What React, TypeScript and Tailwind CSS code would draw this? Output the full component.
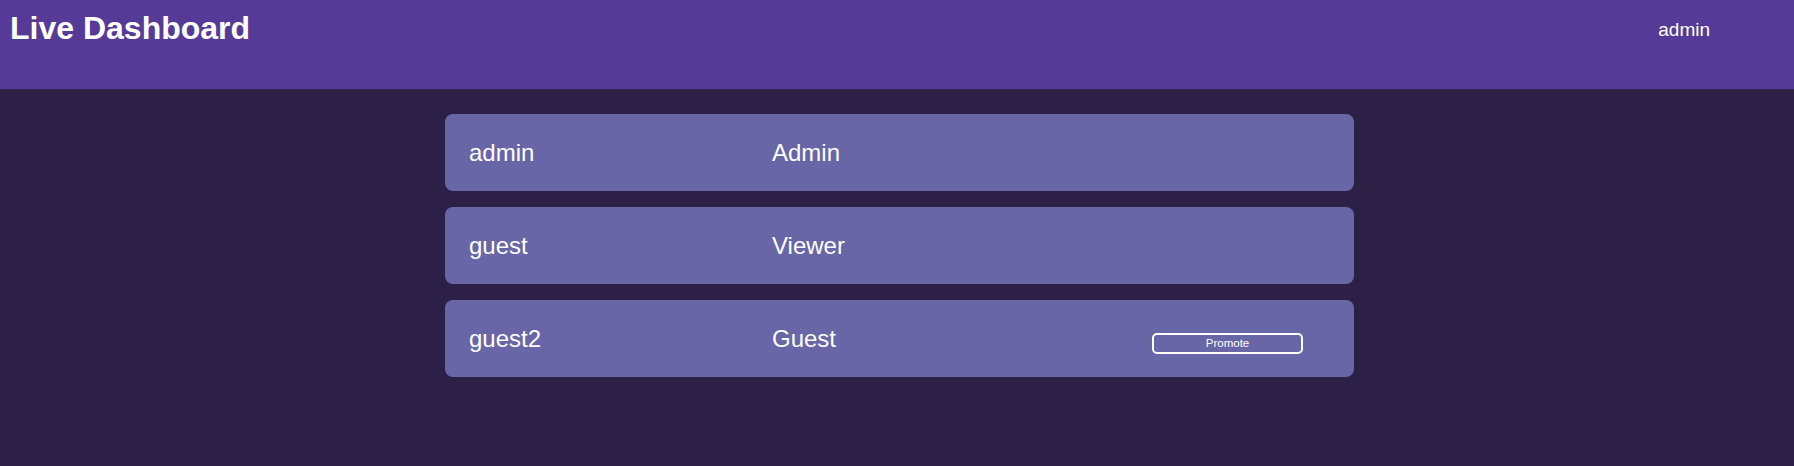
const users = [
  { name: "admin", role: "Admin", promote: false },
  { name: "guest", role: "Viewer", promote: false },
  { name: "guest2", role: "Guest", promote: true },
];

function UserRow({ name, role, promote }: { name: string; role: string; promote: boolean }) {
  return (
    <div className="flex h-[77px] items-center rounded-lg bg-[#6866a6] pl-6 text-white">
      <span className="w-[303px] text-[24px] leading-none">{name}</span>
      <span className="w-[380px] text-[24px] leading-none">{role}</span>
      {promote && (
        <button className="mt-[9px] flex h-[21px] w-[151px] items-center justify-center rounded-[5px] border-2 border-white pt-px text-[11.5px] leading-none text-white">
          Promote
        </button>
      )}
    </div>
  );
}

export default function App() {
  return (
    <div className="min-h-[466px] bg-[#2c2046] font-['Liberation_Sans',Arial,sans-serif]">
      <header className="flex h-[89px] items-start justify-between bg-[#553b97] text-white">
        <h1 className="pl-[10px] pt-[12px] text-[32px] font-bold leading-none">Live Dashboard</h1>
        <span className="pr-[84px] pt-[20px] text-[19px] leading-none">admin</span>
      </header>

      <div className="ml-[445px] mt-[25px] flex w-[909px] flex-col gap-4">
        {users.map((u) => (
          <UserRow key={u.name} {...u} />
        ))}
      </div>
    </div>
  );
}
